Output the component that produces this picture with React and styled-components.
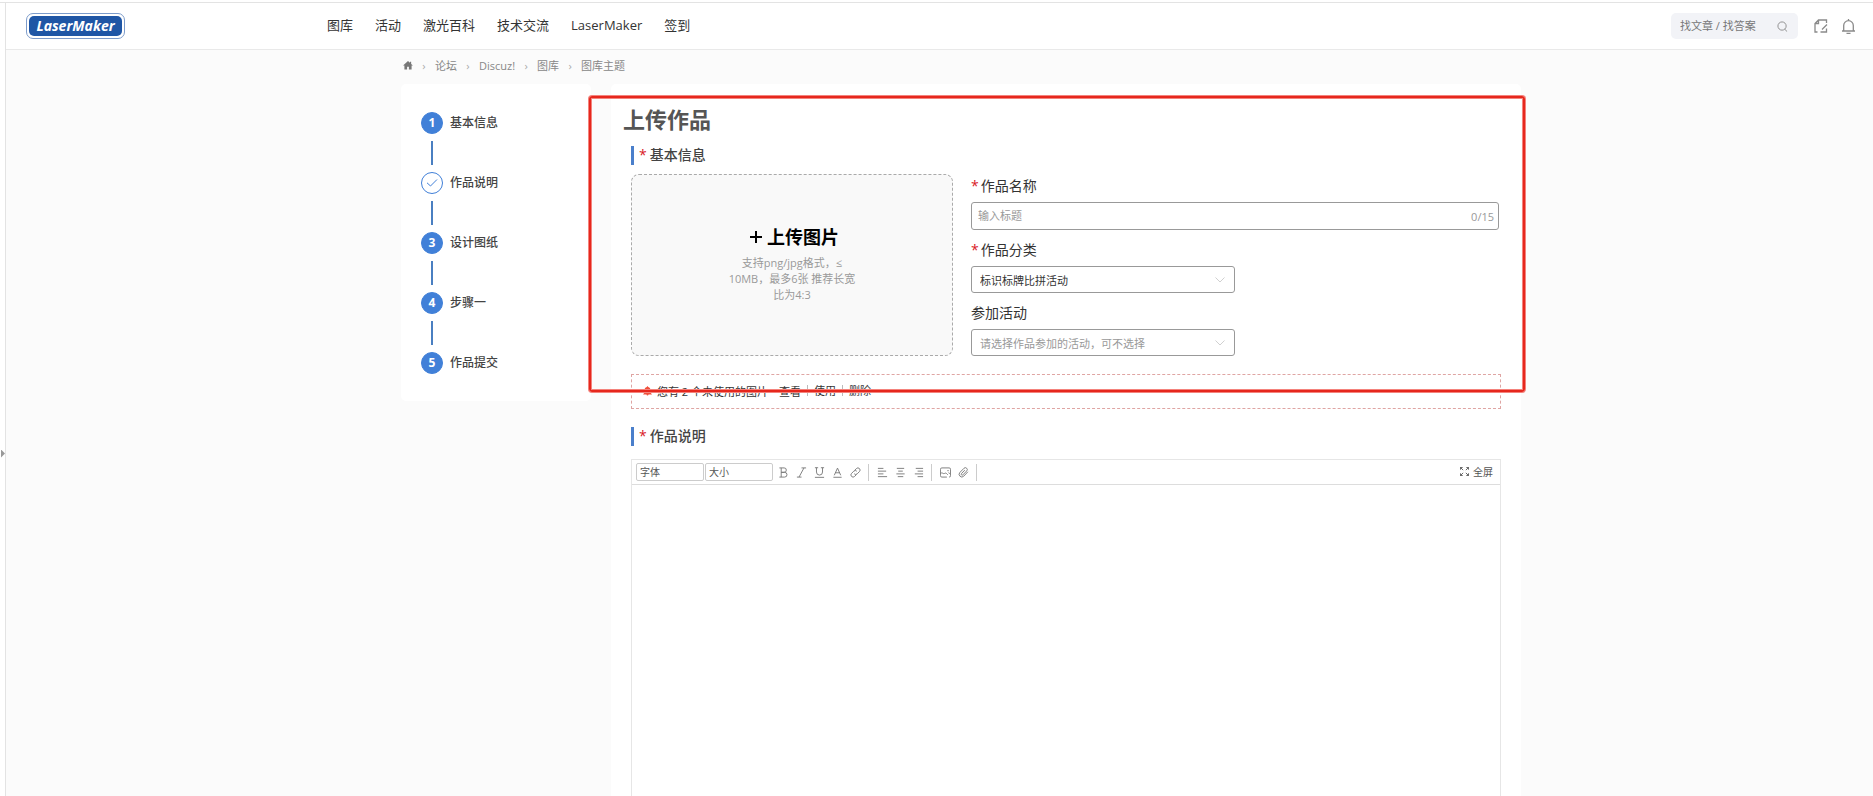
import React, { Component } from "react";
import styled, { createGlobalStyle } from "styled-components";

const GlobalStyle = createGlobalStyle`
  * {
    box-sizing: border-box;
  }
  body {
    margin: 0;
    background: #fbfbfb;
    color: #333;
    font-family: "Open Sans", "Noto Sans CJK SC", sans-serif;
    font-size: 11px;
  }
  a {
    color: inherit;
    text-decoration: none;
  }
  input, select, button, textarea {
    font-family: inherit;
  }
`;

const Page = styled.div`
  display: flex;
  flex-direction: column;
  min-height: 100vh;
`;

const TopStrip = styled.div`
  height: 3px;
  background: #fff;
  border-bottom: 1px solid #e3e3e3;
`;

const Body = styled.div`
  display: flex;
  flex: 1;
`;

const Gutter = styled.aside`
  display: flex;
  align-items: center;
  width: 5px;
  padding-top: 108px;
  background: #fff;
`;

const GutterToggle = styled.button`
  width: 4px;
  height: 8px;
  margin: 0 0 0 1px;
  padding: 0;
  border: 0;
  background: #999;
  clip-path: polygon(0 0, 100% 50%, 0 100%);
`;

const Shell = styled.div`
  display: flex;
  flex-direction: column;
  flex: 1;
  border-left: 1px solid #e3e3e3;
`;

const Header = styled.header`
  display: flex;
  align-items: center;
  height: 47px;
  padding: 0 17px 0 20px;
  background: #fff;
  border-bottom: 1px solid #e9e9e9;
`;

const Logo = styled.a`
  width: 99px;
  height: 26px;
  border: 1px solid #7d9ccb;
  border-radius: 7px;
  padding: 2px;
  background: #fff;

  span {
    display: block;
    height: 20px;
    border-radius: 5px;
    background: #1f56a5;
    color: #fff;
    font-size: 14px;
    font-style: italic;
    font-weight: 700;
    line-height: 20px;
    text-align: center;
  }
`;

const Nav = styled.nav`
  display: flex;
  gap: 22px;
  margin: 0 0 2px 202px;
  font-size: 13px;
  line-height: 20px;
  white-space: nowrap;
`;

const Tools = styled.div`
  display: flex;
  align-items: center;
  margin-left: auto;
  color: #8a8a8a;
`;

const SearchBox = styled.label`
  display: flex;
  align-items: center;
  width: 127px;
  height: 26px;
  padding: 0 10px 0 9px;
  border-radius: 5px;
  background: #f2f3f7;

  input {
    flex: 1;
    min-width: 0;
    padding: 0 0 2px;
    border: 0;
    background: none;
    font-size: 11px;
    outline: none;
  }
  input::placeholder {
    color: #777;
  }
`;

const IconButton = styled.button`
  display: flex;
  margin-left: ${props => props.$gap}px;
  padding: 0;
  border: 0;
  background: none;
  color: inherit;
`;

const Container = styled.div`
  width: 100%;
  max-width: 1163px;
  margin: 0 auto;
  padding-left: 43px;
`;

const Crumbs = styled.nav`
  display: flex;
  align-items: center;
  height: 32px;
  margin-bottom: 2px;
  padding-left: 2px;
  color: #888;
  line-height: 16px;
`;

const CrumbArrow = styled.span`
  width: 22px;
  color: #aaa;
  text-align: center;
`;

const Columns = styled(Container)`
  display: flex;
  flex: 1;
  align-items: flex-start;
  gap: 20px;
`;

const StepList = styled.ol`
  flex: none;
  width: 190px;
  margin: 0;
  padding: 28px 20px 27px;
  border-radius: 5px;
  background: #fff;
  list-style: none;
`;

const Step = styled.li`
  & + &::before {
    content: "";
    display: block;
    width: 2px;
    height: 24px;
    margin: 7px 10px;
    background: #4a7fc1;
  }

  a {
    display: flex;
    align-items: center;
    gap: 7px;
    color: #444;
    font-size: 12px;
    font-weight: 500;
    line-height: 22px;
  }
`;

const StepMark = styled.span`
  display: flex;
  align-items: center;
  justify-content: center;
  width: 22px;
  height: 22px;
  border: 1px solid #4180d8;
  border-radius: 50%;
  background: ${props => (props.$done ? "#fff" : "#4180d8")};
  color: ${props => (props.$done ? "#4180d8" : "#fff")};
  font-size: 12px;
  font-weight: 700;
`;

const Main = styled.main`
  position: relative;
  display: flex;
  flex: 1;
  align-self: stretch;
  flex-direction: column;
  min-width: 0;
  padding: 20px 20px 0;
  border-radius: 5px 5px 0 0;
  background: #fff;
`;

const Highlight = styled.div`
  position: absolute;
  top: 12px;
  right: -4px;
  left: -22px;
  height: 296px;
  border: 2px solid #e6271d;
  border-radius: 3px;
  box-shadow: 0 0 0 1px #f4837c, inset 0 0 0 1px #f4837c;
  pointer-events: none;
`;

const Title = styled.h1`
  margin: 0 0 12px -8px;
  color: #555;
  font-size: 22px;
  line-height: 30px;
`;

const SectionTitle = styled.h2`
  display: flex;
  gap: 3px;
  height: 19px;
  margin: 0 0 ${props => props.$space}px;
  padding-left: 5px;
  border-left: 3px solid #4a7fcb;
  color: #444;
  font-size: 14px;
  font-weight: 500;
  line-height: 17px;
`;

const Star = styled.span`
  color: #d9201f;
`;

const BasicInfo = styled.section`
  display: grid;
  grid-template-columns: 322px 1fr;
  gap: 18px;
`;

const Upload = styled.button`
  display: flex;
  flex-direction: column;
  align-items: center;
  justify-content: center;
  height: 182px;
  padding: 0 0 4px;
  border: 1px dashed #aaa;
  border-radius: 8px;
  background: #f9f9f9;
  color: #000;

  strong {
    display: flex;
    align-items: center;
    gap: 4px;
    padding-left: 4px;
    font-size: 18px;
    line-height: 26px;
  }
  span {
    width: 132px;
    margin-top: 5px;
    color: #999;
    font-size: 11px;
    line-height: 16px;
  }
`;

const Fields = styled.div`
  display: flex;
  flex-direction: column;
  gap: 10px;
  padding: 2px 2px 0 0;
`;

const Label = styled.label`
  display: flex;
  gap: 2px;
  margin-bottom: 6px;
  font-size: 14px;
  line-height: 20px;
`;

const NameBox = styled.div`
  display: flex;
  align-items: center;
  height: 28px;
  padding: 0 4px 0 6px;
  border: 1px solid #999;
  border-radius: 3px;
  color: #999;
  font-size: 11px;

  input {
    flex: 1;
    padding: 0 0 2px;
    border: 0;
    font-size: 11px;
    outline: none;
  }
  input::placeholder {
    color: #999;
  }
`;

const SelectBox = styled.div`
  display: grid;
  width: 264px;

  select, svg {
    grid-area: 1 / 1;
  }
  select {
    height: 27px;
    padding: 2px 8px 0;
    appearance: none;
    border: 1px solid #999;
    border-radius: 3px;
    background: #fff;
    color: ${props => (props.$empty ? "#999" : "#333")};
    font-size: 11px;
  }
  svg {
    place-self: center end;
    margin-right: 9px;
    pointer-events: none;
  }
`;

const Notice = styled.div`
  display: flex;
  align-items: center;
  height: 35px;
  margin: 18px 0;
  padding: 0 0 2px 11px;
  border: 1px dashed #dfa5a3;

  svg {
    margin-right: 5px;
  }
  span {
    margin-right: 11px;
  }
  a + a {
    margin-left: 6px;
    padding-left: 6px;
    border-left: 1px solid #bbb;
    line-height: 11px;
  }
`;

const Editor = styled.section`
  display: flex;
  flex: 1;
  flex-direction: column;
  border: 1px solid #e6e6e6;
  border-bottom: 0;

  textarea {
    flex: 1;
    border: 0;
    outline: none;
    resize: none;
  }
`;

const Toolbar = styled.div`
  display: flex;
  align-items: center;
  height: 25px;
  padding: 0 7px 0 4px;
  border-bottom: 1px solid #ddd;
  color: #777;

  select {
    width: 68px;
    height: 18px;
    margin-right: 1px;
    padding: 0 3px;
    appearance: none;
    border: 1px solid #ccc;
    border-radius: 2px;
    background: #fff;
    color: #555;
    font-size: 10px;
  }
`;

const Tool = styled.button`
  display: flex;
  justify-content: center;
  width: 18px;
  padding: 1px 0 0;
  border: 0;
  background: none;
  color: inherit;
`;

const ToolGroup = styled.div`
  display: flex;
  align-items: center;
  height: 17px;
  padding: 0 4px;
  border-right: 1px solid #ccc;

  &:first-of-type {
    padding-left: 0;
  }
`;

const FullScreen = styled.button`
  display: flex;
  align-items: center;
  gap: 4px;
  margin-left: auto;
  padding: 0 0 2px;
  border: 0;
  background: none;
  color: #555;
  font-size: 10px;
`;

const Icon = ({ size = 12, box = 12, stroke = 1, children }) => (
  <svg width={size} height={size} viewBox={`0 0 ${box} ${box}`} fill="none" stroke="currentColor" strokeWidth={stroke} aria-hidden="true">
    {children}
  </svg>
);

const menu = ["图库", "活动", "激光百科", "技术交流", "LaserMaker", "签到"];
const crumbs = ["论坛", "Discuz!", "图库", "图库主题"];
const steps = [
  { text: "基本信息" },
  { text: "作品说明", done: true },
  { text: "设计图纸" },
  { text: "步骤一" },
  { text: "作品提交" }
];

const toolGroups = [
  [
    { name: "加粗", icon: <path d="M1.5 1h5.2a2.4 2.4 0 0 1 0 4.800H3.500M3.500 5.800h3.700a2.600 2.600 0 0 1 0 5.200H1.500M3.500 1v10" /> },
    { name: "斜体", icon: <path d="M6 1h5M1 11h5M8.700 1L3.300 11" /> },
    { name: "下划线", icon: <path d="M1 .8h3.500M7.500.8H11M2.700.8v4.700a3.300 3.300 0 0 0 6.600 0V.8M1 11.300h10" /> },
    { name: "颜色", icon: <path d="M2.500 9L6 1.200 9.500 9M3.800 6.300h4.400M1.500 11.200h9" /> },
    { name: "链接", icon: <path d="M5 3.700l2-2a2.300 2.300 0 0 1 3.300 3.300l-2.400 2.400a2.300 2.300 0 0 1-3.300 0M7 8.300l-2 2A2.300 2.300 0 0 1 1.700 7l2.400-2.400a2.300 2.300 0 0 1 3.300 0" /> }
  ],
  [
    { name: "居左", icon: <path d="M1 1.500h6M1 4.500h9M1 7.500h6M1 10.500h10" /> },
    { name: "居中", icon: <path d="M2 1.500h8M3.500 4.500h5M1.500 7.500h9M3 10.500h6" /> },
    { name: "居右", icon: <path d="M3 1.500h8M5 4.500h6M2 7.500h9M5 10.500h6" /> }
  ],
  [
    {
      name: "图片",
      icon: (
        <>
          <path d="M7.500 11H2A1.500 1.500 0 0 1 .5 9.500V2.500A1.500 1.500 0 0 1 2 1h8a1.500 1.500 0 0 1 1.500 1.500v7A1.500 1.500 0 0 1 10 11" />
          <path d="M.5 7c1.500-1.200 2.500 0 3.500.2S6 6 7 7l1.500 1.500M8 4h1.500M9.500 6l1 1.500" />
        </>
      )
    },
    { name: "附件", icon: <path d="M10.800 5.200L6.300 10a2.900 2.900 0 0 1-4.200-4.100l4.400-4.500a2 2 0 0 1 3 2.900L5.300 8.600a1 1 0 0 1-1.500-1.400l3.600-3.800" /> }
  ]
];

const ChevronDown = () => (
  <svg width="12" height="8" viewBox="0 0 12 8" fill="none" stroke="#d0d0d0" aria-hidden="true">
    <path d="M1.500 1.500L6 6l4.500-4.500" />
  </svg>
);

class App extends Component {
  constructor(props) {
    super(props);
    this.state = { name: "", category: "标识标牌比拼活动", activity: "" };
  }

  handleChange = e => {
    this.setState({ [e.target.name]: e.target.value });
  };

  render() {
    const { name, category, activity } = this.state;

    return (
      <Page>
        <GlobalStyle />
        <TopStrip />
        <Body>
          <Gutter>
            <GutterToggle aria-label="展开" />
          </Gutter>
          <Shell>
            <Header>
              <Logo href="#"><span>LaserMaker</span></Logo>
              <Nav>
                {menu.map(item => <a href="#" key={item}>{item}</a>)}
              </Nav>
              <Tools>
                <SearchBox>
                  <input type="text" aria-label="搜索" placeholder="找文章 / 找答案" />
                  <Icon size={11}>
                    <circle cx="5.500" cy="5.500" r="4.500" />
                    <path d="M8.500 9l2.500 2.500" />
                  </Icon>
                </SearchBox>
                <IconButton $gap={16} aria-label="发布">
                  <Icon size={14} box={14} stroke={1.3}>
                    <path d="M12.500 4V1H4.500L1 4.500V13h2.500M4.500 1v3.500H1M6.500 13h6V9.500M13 5.500L8 10.500" />
                  </Icon>
                </IconButton>
                <IconButton $gap={13} aria-label="消息">
                  <Icon size={15} box={15} stroke={1.3}>
                    <path d="M1 12h13M2.700 12V6.500a4.800 4.800 0 0 1 9.600 0V12M7.500 0v1.700M5.500 14.300h4" />
                  </Icon>
                </IconButton>
              </Tools>
            </Header>

            <Container>
              <Crumbs>
                <a href="#" aria-label="首页">
                  <svg width="10" height="9" viewBox="0 0 11 10" fill="#777" aria-hidden="true">
                    <path d="M5.500 0L0 5h1.500v4.500h3V6.500h2v3h3V5H11L9 3.200V.8H7.700v1.200z" />
                  </svg>
                </a>
                {crumbs.map(item => (
                  <React.Fragment key={item}>
                    <CrumbArrow>›</CrumbArrow>
                    <a href="#">{item}</a>
                  </React.Fragment>
                ))}
              </Crumbs>
            </Container>

            <Columns>
              <StepList>
                {steps.map((step, i) => (
                  <Step key={step.text}>
                    <a href="#">
                      <StepMark $done={step.done}>
                        {step.done ? <Icon><path d="M1 5.800L4.500 9 11 2.500" /></Icon> : i + 1}
                      </StepMark>
                      {step.text}
                    </a>
                  </Step>
                ))}
              </StepList>

              <Main>
                <Title>上传作品</Title>
                <SectionTitle $space={9}><Star>*</Star>基本信息</SectionTitle>
                <BasicInfo>
                  <Upload>
                    <strong>
                      <Icon size={14} box={14} stroke={2}><path d="M7 1v12M1 7h12" /></Icon>
                      上传图片
                    </strong>
                    <span>支持png/jpg格式，≤ 10MB，最多6张 推荐长宽比为4:3</span>
                  </Upload>
                  <Fields>
                    <div>
                      <Label htmlFor="name"><Star>*</Star>作品名称</Label>
                      <NameBox>
                        <input id="name" name="name" maxLength={15} placeholder="输入标题" value={name} onChange={this.handleChange} />
                        {name.length}/15
                      </NameBox>
                    </div>
                    <div>
                      <Label htmlFor="category"><Star>*</Star>作品分类</Label>
                      <SelectBox>
                        <select id="category" name="category" value={category} onChange={this.handleChange}>
                          <option>标识标牌比拼活动</option>
                        </select>
                        <ChevronDown />
                      </SelectBox>
                    </div>
                    <div>
                      <Label htmlFor="activity">参加活动</Label>
                      <SelectBox $empty={!activity}>
                        <select id="activity" name="activity" value={activity} onChange={this.handleChange}>
                          <option value="">请选择作品参加的活动，可不选择</option>
                        </select>
                        <ChevronDown />
                      </SelectBox>
                    </div>
                  </Fields>
                </BasicInfo>

                <Notice>
                  <svg width="9" height="10" viewBox="0 0 9 10" fill="#f0503c" aria-hidden="true">
                    <path d="M4.500 0l.8 1A3 3 0 0 1 7.500 4v2.500L9 8.500H5.500a1 1 0 0 1-2 0H0l1.500-2V4A3 3 0 0 1 3.700 1z" />
                  </svg>
                  <span>您有 2 个未使用的图片</span>
                  <a href="#">查看</a>
                  <a href="#">使用</a>
                  <a href="#">删除</a>
                </Notice>

                <SectionTitle $space={13}><Star>*</Star>作品说明</SectionTitle>
                <Editor>
                  <Toolbar>
                    <select aria-label="字体"><option>字体</option></select>
                    <select aria-label="大小"><option>大小</option></select>
                    {toolGroups.map((group, i) => (
                      <ToolGroup key={i}>
                        {group.map(tool => (
                          <Tool key={tool.name} aria-label={tool.name}>
                            <Icon size={11}>{tool.icon}</Icon>
                          </Tool>
                        ))}
                      </ToolGroup>
                    ))}
                    <FullScreen>
                      <Icon size={9} box={10}>
                        <path d="M.5 3V.5H3M.5.5l3 3M7 .5h2.500V3M9.500.5l-3 3M.5 7v2.500H3M.5 9.500l3-3M7 9.500h2.500V7M9.500 9.500l-3-3" />
                      </Icon>
                      全屏
                    </FullScreen>
                  </Toolbar>
                  <textarea aria-label="作品说明" />
                </Editor>
                <Highlight />
              </Main>
            </Columns>
          </Shell>
        </Body>
      </Page>
    );
  }
}

export default App;
